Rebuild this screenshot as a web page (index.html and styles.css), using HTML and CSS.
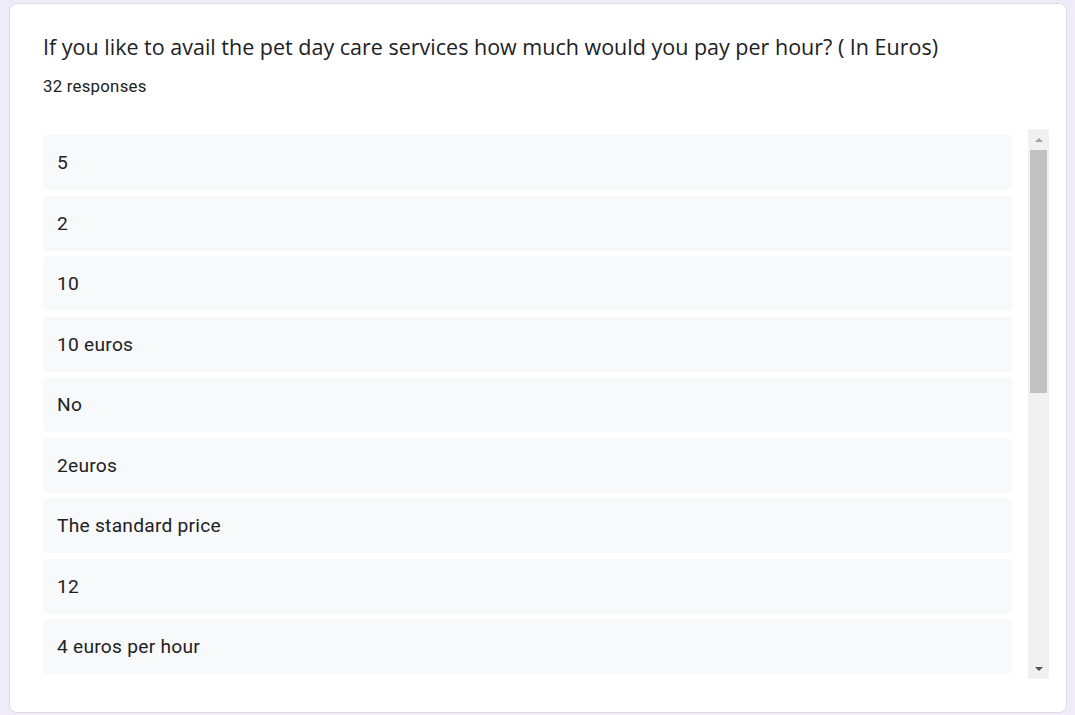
FILE: index.html
```html
<!DOCTYPE html>
<html>
<head>
<meta charset="utf-8">
<link rel="stylesheet" href="styles.css">
</head>
<body>
<div class="card">
  <div class="title">If you like to avail the pet day care services how much would you pay per hour? ( In Euros)</div>
  <div class="count">32 responses</div>
  <div class="list-wrap">
    <div class="list">
      <div class="row">5</div>
      <div class="row">2</div>
      <div class="row">10</div>
      <div class="row">10 euros</div>
      <div class="row">No</div>
      <div class="row">2euros</div>
      <div class="row">The standard price</div>
      <div class="row">12</div>
      <div class="row">4 euros per hour</div>
    </div>
    <div class="scrollbar">
      <div class="arrow up"></div>
      <div class="thumb"></div>
      <div class="track-rest"></div>
      <div class="arrow down"></div>
    </div>
  </div>
</div>
</body>
</html>
```
FILE: styles.css
```css
html, body {
  margin: 0;
  padding: 0;
}
body {
  background: #f0ebf8;
  width: 1075px;
  height: 715px;
  overflow: hidden;
  font-family: Roboto, "Liberation Sans", sans-serif;
  color: #202124;
  padding: 3px 0 0 9px;
  box-sizing: border-box;
}
.card {
  width: 1058px;
  height: 710px;
  box-sizing: border-box;
  background: #fff;
  border: 1px solid #dadce0;
  border-radius: 8px;
  padding: 29px 17px 0 33px;
}
.title {
  font-family: "Open Sans", Roboto, sans-serif;
  font-size: 21.5px;
  line-height: 28px;
  color: #202124;
  letter-spacing: 0;
  white-space: nowrap;
}
.count {
  font-size: 16.8px;
  line-height: 20px;
  margin-top: 15px;
  letter-spacing: 0.25px;
  color: #202124;
}
.list-wrap {
  margin-top: 33px;
  display: flex;
  height: 550px;
  gap: 16px;
}
.list {
  flex: 1;
  overflow: hidden;
  padding-top: 6px;
}
.row {
  height: 55px;
  margin-bottom: 5.5px;
  background: #f8f9fa;
  border-radius: 4px;
  box-sizing: border-box;
  padding-left: 14px;
  display: flex;
  align-items: center;
  font-size: 19.2px;
  letter-spacing: 0.25px;
  color: #202124;
}
.scrollbar {
  width: 21px;
  background: #f1f1f1;
  display: flex;
  flex-direction: column;
  align-items: center;
}
.arrow {
  width: 17px;
  height: 21px;
  display: flex;
  align-items: center;
  justify-content: center;
}
.arrow.up::before {
  content: "";
  border-left: 4px solid transparent;
  border-right: 4px solid transparent;
  border-bottom: 4px solid #a3a3a3;
}
.arrow.down::before {
  content: "";
  border-left: 4px solid transparent;
  border-right: 4px solid transparent;
  border-top: 4px solid #505050;
}
.thumb {
  width: 17px;
  height: 243px;
  background: #c1c1c1;
}
.track-rest {
  flex: 1;
}
```
